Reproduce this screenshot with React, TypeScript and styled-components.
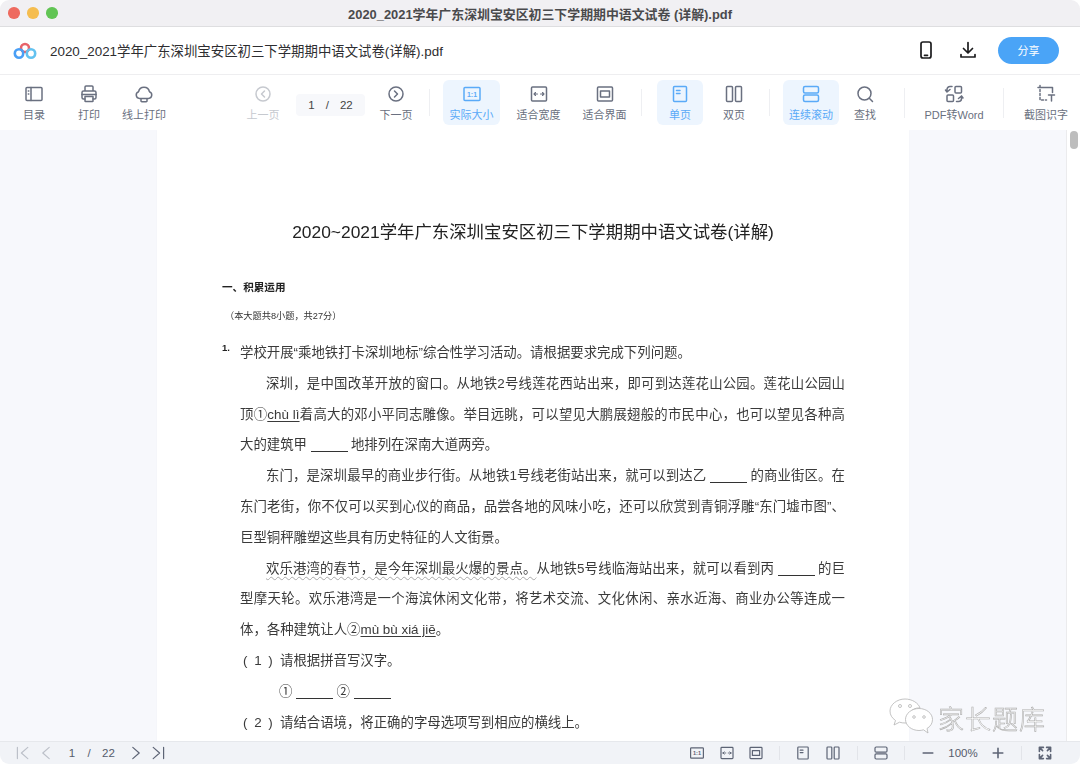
import React, { FC, ReactNode } from 'react';
import styled, { createGlobalStyle } from 'styled-components';

const UI_FONT = `"Liberation Sans", "Noto Sans CJK SC", sans-serif`;

const GlobalStyle = createGlobalStyle`
  html, body {
    margin: 0;
    padding: 0;
    background: #fff;
    overflow: hidden;
  }
  * {
    box-sizing: border-box;
  }
`;

const Window = styled.div`
  width: 1080px;
  height: 764px;
  display: flex;
  flex-direction: column;
  border-radius: 9px;
  overflow: hidden;
  position: relative;
  font-family: ${UI_FONT};
  background: #fff;
`;

const TitleBar = styled.div`
  height: 27px;
  flex: none;
  background: #f1f0f3;
  border-bottom: 1px solid #dedee0;
  position: relative;
  display: flex;
  align-items: center;
  justify-content: center;
  font-size: 12.9px;
  font-weight: 700;
  color: #4a4a4c;
`;

const Lights = styled.div`
  position: absolute;
  left: 8px;
  top: 7px;
  display: flex;
  gap: 7.5px;
`;

const Light = styled.span<{ $c: string }>`
  width: 11.5px;
  height: 11.5px;
  border-radius: 50%;
  background: ${p => p.$c};
`;

const Header = styled.div`
  height: 48px;
  flex: none;
  display: flex;
  align-items: center;
  padding: 0 21px 1px 13px;
  border-bottom: 1px solid #eeeef0;
`;

const FileName = styled.div`
  margin-left: 13px;
  font-size: 13.4px;
  color: #2d2d30;
  flex: 1;
`;

const HeaderIcon = styled.div<{ $mr: number }>`
  width: 20px;
  height: 20px;
  margin-right: ${p => p.$mr}px;
  color: #1c1c1e;
`;

const ShareButton = styled.div`
  width: 61px;
  height: 27px;
  border-radius: 14px;
  background: #4aa4f7;
  color: #fff;
  font-size: 11px;
  display: flex;
  align-items: center;
  justify-content: center;
`;

const Toolbar = styled.div`
  height: 55px;
  flex: none;
  display: flex;
  align-items: center;
  padding-left: 12px;
  background: #fff;
`;

const ToolItem = styled.div<{ $w: number; $ml?: number; $active?: boolean; $off?: boolean }>`
  width: ${p => p.$w}px;
  margin-left: ${p => p.$ml ?? 0}px;
  height: 45px;
  flex: none;
  border-radius: 6px;
  display: flex;
  flex-direction: column;
  align-items: center;
  padding-top: 4px;
  background: ${p => (p.$active ? '#edf5fe' : 'transparent')};
  color: ${p => (p.$active ? '#5aaaf8' : p.$off ? '#c6c9cf' : '#6a7080')};
  font-size: 11px;
  white-space: nowrap;
`;

const ToolIcon = styled.div`
  width: 20px;
  height: 20px;
  margin-bottom: 2px;
`;

const PageBox = styled.div`
  width: 69px;
  height: 22px;
  margin-left: 11px;
  flex: none;
  border-radius: 4px;
  background: #f7f8fb;
  color: #444;
  font-size: 11.5px;
  display: flex;
  align-items: center;
  justify-content: center;
  gap: 11px;
  position: relative;
  top: 2px;
`;

const Sep = styled.div<{ $ml: number; $h?: number }>`
  width: 1px;
  height: ${p => p.$h ?? 27}px;
  margin-left: ${p => p.$ml}px;
  flex: none;
  background: #eeeff2;
`;

const Main = styled.div`
  flex: 1;
  min-height: 0;
  display: flex;
  background: #f7f8fc;
  overflow: hidden;
`;

const Gutter = styled.div`
  width: 157px;
  flex: none;
`;

const Sheet = styled.div`
  width: 752px;
  flex: none;
  background: #fff;
  padding: 89px 0 0 65px;
  color: #3a3a3a;
  font-family: ${UI_FONT};
  box-shadow: 0 0 2px rgba(0, 0, 0, 0.03);
  filter: blur(0.25px);
`;

const DocTitle = styled.div`
  width: 622px;
  text-align: center;
  font-size: 17.4px;
  line-height: 26px;
  color: #222;
`;

const Section = styled.div`
  margin-top: 35px;
  font-size: 10.6px;
  font-weight: 700;
  line-height: 14px;
  color: #222;
`;

const Note = styled.div`
  margin: 15px 0 15px 3px;
  font-size: 9.2px;
  line-height: 14px;
  color: #333;
`;

const Line = styled.div<{ $indent?: number; $fill?: boolean }>`
  width: ${p => 605 - (p.$indent ?? 0)}px;
  margin-left: ${p => 18 + (p.$indent ?? 0)}px;
  height: 30.8px;
  line-height: 30.8px;
  font-size: 13.4px;
  white-space: nowrap;
  text-align: justify;
  text-align-last: ${p => (p.$fill ? 'justify' : 'left')};
  position: relative;
`;

const Num = styled.span`
  position: absolute;
  left: -18px;
  top: -5px;
  font-size: 9.5px;
  font-weight: 700;
  color: #222;
`;

const ListMark = styled.span`
  display: inline-block;
  width: 40px;
  padding-left: 3px;
  letter-spacing: 1.500px;
`;

const Blank = styled.span<{ $w: number }>`
  display: inline-block;
  width: ${p => p.$w}px;
  margin: 0 3px 0 4px;
  height: 10px;
  border-bottom: 1.7px solid #333;
  vertical-align: -3px;
`;

const Pinyin = styled.span`
  text-decoration: underline;
  text-underline-offset: 2px;
`;

const Wavy = styled.span`
  text-decoration: underline wavy #a9a9a9 1px;
  text-underline-offset: 3px;
`;

const ScrollCol = styled.div`
  width: 14px;
  margin-left: auto;
  flex: none;
  background: #fff;
  border-left: 1px solid #ebebed;
  padding: 1px 0 0 3px;
`;

const Thumb = styled.div`
  width: 8px;
  height: 18px;
  border-radius: 4px;
  background: #bdbdbd;
`;

const StatusBar = styled.div`
  height: 23px;
  flex: none;
  background: #f1f3f7;
  border-top: 1px solid #e6e8ec;
  display: flex;
  align-items: center;
  padding-left: 15px;
  color: #5d6475;
`;

const StatusIcon = styled.div<{ $ml?: number; $off?: boolean }>`
  width: 16px;
  height: 16px;
  flex: none;
  margin-left: ${p => p.$ml ?? 0}px;
  color: ${p => (p.$off ? '#bcc0c9' : '#5d6475')};
`;

const StatusText = styled.span<{ $ml: number; $w: number }>`
  margin-left: ${p => p.$ml}px;
  width: ${p => p.$w}px;
  flex: none;
  font-size: 11.5px;
  color: #555b6b;
  text-align: center;
`;

const StatusSep = styled.div<{ $ml: number }>`
  width: 1px;
  height: 14px;
  flex: none;
  margin-left: ${p => p.$ml}px;
  background: #e2e4e9;
`;

const Watermark = styled.div`
  position: absolute;
  left: 889px;
  top: 698px;
  display: flex;
  align-items: center;
  gap: 3px;
  filter: blur(0.3px);
`;

const MarkText = styled.span`
  font-family: "Noto Sans CJK SC", sans-serif;
  font-size: 26px;
  font-weight: 300;
  letter-spacing: 1px;
  color: #fff;
  -webkit-text-stroke: 0.6px #adadad;
`;

const Ico: FC<{ children: ReactNode; sw?: number }> = ({ children, sw = 1.5 }) => (
  <svg
    width="100%"
    height="100%"
    viewBox="0 0 20 20"
    fill="none"
    stroke="currentColor"
    strokeWidth={sw}
    strokeLinecap="round"
    strokeLinejoin="round"
    style={{ display: 'block' }}
  >
    {children}
  </svg>
);

const SmallLabel: FC<{ x: number; y: number; text: string }> = ({ x, y, text }) => (
  <text x={x} y={y} fontSize={7} fontWeight={700} fill="currentColor" stroke="none" textAnchor="middle" fontFamily="Liberation Sans">
    {text}
  </text>
);

const OneToOne = () => (
  <Ico>
    <rect x="2" y="3.500" width="16" height="13" rx="1" />
    <SmallLabel x={10} y={12.600} text="1:1" />
  </Ico>
);
const FitWidth = () => (
  <Ico>
    <rect x="2.500" y="3" width="15" height="14" rx="1" />
    <path d="M5 10h3.500M5 10l1.500-1.500M5 10l1.500 1.500M15 10h-3.500M15 10l-1.500-1.500M15 10l-1.500 1.500" strokeWidth="1.100" />
  </Ico>
);
const FitPage = () => (
  <Ico>
    <rect x="2.500" y="3" width="15" height="14" rx="1" />
    <rect x="5.500" y="7" width="9" height="6" />
  </Ico>
);
const SinglePage = () => (
  <Ico>
    <rect x="3.500" y="2.500" width="13" height="15" rx="1" />
    <path d="M6.500 6.500h3.500M6.500 9.500h3.500" />
  </Ico>
);
const DoublePage = () => (
  <Ico>
    <rect x="2.500" y="2.500" width="6" height="15" rx="1" />
    <rect x="11.500" y="2.500" width="6" height="15" rx="1" />
  </Ico>
);
const Continuous = () => (
  <Ico>
    <rect x="2.500" y="2.500" width="15" height="6.500" rx="1.500" />
    <rect x="2.500" y="11" width="15" height="6.500" rx="1.500" />
  </Ico>
);

const Logo = () => (
  <svg width="24" height="20" viewBox="0 0 24 20" fill="none" style={{ display: 'block' }}>
    <circle cx="12" cy="8" r="4" stroke="#e8636a" strokeWidth="2.600" />
    <circle cx="18" cy="13.500" r="4.200" stroke="#63c2f0" strokeWidth="2.600" />
    <circle cx="6" cy="13.500" r="4.200" stroke="#4a9ff5" strokeWidth="2.600" />
  </svg>
);

const WeChat = () => (
  <svg width="46" height="38" viewBox="0 0 46 38" fill="#fff" stroke="#b4b4b4" strokeWidth="0.8">
    <path d="M16 1C8 1 1 6.500 1 13c0 4 2 7 5.500 9.500L5 27l5.500-2.800c2 .6 3.500.8 5.500.8 .8 0 1.500 0 2-.1C17 17 23 9 31 10 29.500 5 23 1 16 1z" />
    <path d="M30 10.500c-7.500 0-13.500 5-13.500 11s6 11 13.500 11c1.500 0 3-.2 4.500-.7L39 35l-1-4.500c3.500-2 5.500-5.300 5.500-9 0-6-6-11-13.500-11z" />
    <circle cx="11" cy="8" r="1.500" />
    <circle cx="21" cy="8" r="1.500" />
    <circle cx="25" cy="19" r="1.300" />
    <circle cx="35" cy="19" r="1.300" />
  </svg>
);

const App: FC = () => {
  return (
    <>
      <GlobalStyle />
      <Window>
        <TitleBar>
          <Lights>
            <Light $c="#ee6a5f" />
            <Light $c="#f5bd4f" />
            <Light $c="#61c454" />
          </Lights>
          2020_2021学年广东深圳宝安区初三下学期期中语文试卷 (详解).pdf
        </TitleBar>
        <Header>
          <Logo />
          <FileName>2020_2021学年广东深圳宝安区初三下学期期中语文试卷(详解).pdf</FileName>
          <HeaderIcon $mr={22}>
            <Ico sw={1.700}>
              <rect x="5" y="2" width="10" height="16" rx="2" />
              <path d="M8.500 15.300h3" />
            </Ico>
          </HeaderIcon>
          <HeaderIcon $mr={20}>
            <Ico sw={1.700}>
              <path d="M10 2.500v10M5.500 8.500l4.500 4.500 4.500-4.500M3 14.500v2.500h14v-2.500" />
            </Ico>
          </HeaderIcon>
          <ShareButton>分享</ShareButton>
        </Header>
        <Toolbar>
          <ToolItem $w={44}>
            <ToolIcon>
              <Ico>
                <rect x="2" y="3.500" width="16" height="13" rx="1" />
                <path d="M7 3.500v13M4.300 7h.5M4.300 10h.5" />
              </Ico>
            </ToolIcon>
            目录
          </ToolItem>
          <ToolItem $w={44} $ml={11}>
            <ToolIcon>
              <Ico>
                <path d="M6 7V3a1 1 0 0 1 1-1h6a1 1 0 0 1 1 1v4M6 15H4.500A1.500 1.500 0 0 1 3 13.500V8.500A1.500 1.500 0 0 1 4.500 7h11A1.500 1.500 0 0 1 17 8.500v5a1.500 1.500 0 0 1-1.500 1.500H14" />
                <path d="M6 12.500h8V17a.5.5 0 0 1-.5.5h-7A.5.5 0 0 1 6 17zM3 10.500h14" />
              </Ico>
            </ToolIcon>
            打印
          </ToolItem>
          <ToolItem $w={56} $ml={5}>
            <ToolIcon>
              <Ico>
                <path d="M7 14.500H5.500a3.500 3.500 0 0 1-.9-6.800 5.500 5.500 0 0 1 10.800 0 3.500 3.500 0 0 1-.9 6.800H7zM7 14.500v2.500a.8.8 0 0 0 .8.8h4.400a.8.8 0 0 0 .8-.8v-2.500" />
              </Ico>
            </ToolIcon>
            线上打印
          </ToolItem>
          <ToolItem $w={44} $ml={69} $off>
            <ToolIcon>
              <Ico>
                <circle cx="10" cy="10" r="7" />
                <path d="M11.500 7L8.500 10l3 3" />
              </Ico>
            </ToolIcon>
            上一页
          </ToolItem>
          <PageBox>
            <span>1</span>
            <span>/</span>
            <span>22</span>
          </PageBox>
          <ToolItem $w={44} $ml={9}>
            <ToolIcon>
              <Ico>
                <circle cx="10" cy="10" r="7" />
                <path d="M8.500 7l3 3-3 3" />
              </Ico>
            </ToolIcon>
            下一页
          </ToolItem>
          <Sep $ml={11} />
          <ToolItem $w={57} $ml={13} $active>
            <ToolIcon><OneToOne /></ToolIcon>
            实际大小
          </ToolItem>
          <ToolItem $w={57} $ml={10}>
            <ToolIcon><FitWidth /></ToolIcon>
            适合宽度
          </ToolItem>
          <ToolItem $w={57} $ml={9}>
            <ToolIcon><FitPage /></ToolIcon>
            适合界面
          </ToolItem>
          <Sep $ml={8} />
          <ToolItem $w={46} $ml={15} $active>
            <ToolIcon><SinglePage /></ToolIcon>
            单页
          </ToolItem>
          <ToolItem $w={46} $ml={8}>
            <ToolIcon><DoublePage /></ToolIcon>
            双页
          </ToolItem>
          <Sep $ml={12} />
          <ToolItem $w={56} $ml={13} $active>
            <ToolIcon><Continuous /></ToolIcon>
            连续滚动
          </ToolItem>
          <ToolItem $w={44} $ml={4}>
            <ToolIcon>
              <Ico>
                <circle cx="9.500" cy="9.500" r="6.500" />
                <path d="M14.300 14.300l3.200 3.200" />
              </Ico>
            </ToolIcon>
            查找
          </ToolItem>
          <Sep $ml={17} $h={30} />
          <ToolItem $w={76} $ml={11}>
            <ToolIcon>
              <Ico>
                <rect x="11" y="2.500" width="6.500" height="6.500" rx="1" />
                <rect x="3" y="11" width="6.500" height="6.500" rx="1" />
                <path d="M3 8V5.500a3 3 0 0 1 3-3h2M6 5.500L3 8 1.500 6M17.500 12v2.500a3 3 0 0 1-3 3h-2M14.500 14.500l3-2.500 1.500 2" />
              </Ico>
            </ToolIcon>
            PDF转Word
          </ToolItem>
          <Sep $ml={11} $h={30} />
          <ToolItem $w={56} $ml={14}>
            <ToolIcon>
              <Ico>
                <path d="M4 1.500v2M2 3.500h14.500v5" />
                <path d="M4 5.500v10.500h6.500" strokeDasharray="2 2" />
                <path d="M12.500 11h6M15.500 11v6" />
              </Ico>
            </ToolIcon>
            截图识字
          </ToolItem>
        </Toolbar>
        <Main>
          <Gutter />
          <Sheet>
            <DocTitle>2020~2021学年广东深圳宝安区初三下学期期中语文试卷(详解)</DocTitle>
            <Section>一、积累运用</Section>
            <Note>（本大题共8小题，共27分）</Note>
            <Line>
              <Num>1.</Num>
              学校开展“乘地铁打卡深圳地标”综合性学习活动。请根据要求完成下列问题。
            </Line>
            <Line $indent={26} $fill>深圳，是中国改革开放的窗口。从地铁2号线莲花西站出来，即可到达莲花山公园。莲花山公园山</Line>
            <Line $fill>顶①<Pinyin>chù lì</Pinyin>着高大的邓小平同志雕像。举目远眺，可以望见大鹏展翅般的市民中心，也可以望见各种高</Line>
            <Line>大的建筑甲<Blank $w={37} />地排列在深南大道两旁。</Line>
            <Line $indent={26} $fill>东门，是深圳最早的商业步行街。从地铁1号线老街站出来，就可以到达乙<Blank $w={37} />的商业街区。在</Line>
            <Line $fill>东门老街，你不仅可以买到心仪的商品，品尝各地的风味小吃，还可以欣赏到青铜浮雕“东门墟市图”、</Line>
            <Line>巨型铜秤雕塑这些具有历史特征的人文街景。</Line>
            <Line $indent={26} $fill><Wavy>欢乐港湾的春节，是今年深圳最火爆的景点。</Wavy>从地铁5号线临海站出来，就可以看到丙<Blank $w={37} />的巨</Line>
            <Line $fill>型摩天轮。欢乐港湾是一个海滨休闲文化带，将艺术交流、文化休闲、亲水近海、商业办公等连成一</Line>
            <Line>体，各种建筑让人②<Pinyin>mù bù xiá jiē</Pinyin>。</Line>
            <Line><ListMark>( 1 )</ListMark>请根据拼音写汉字。</Line>
            <Line $indent={39}>①<Blank $w={37} />②<Blank $w={37} /></Line>
            <Line><ListMark>( 2 )</ListMark>请结合语境，将正确的字母选项写到相应的横线上。</Line>
          </Sheet>
          <ScrollCol>
            <Thumb />
          </ScrollCol>
        </Main>
        <StatusBar>
          <StatusIcon $off>
            <Ico><path d="M3 3v14M16 3L8 10l8 7" /></Ico>
          </StatusIcon>
          <StatusIcon $ml={7} $off>
            <Ico><path d="M14 3L6 10l8 7" /></Ico>
          </StatusIcon>
          <StatusText $ml={12} $w={12}>1</StatusText>
          <StatusText $ml={6} $w={10}>/</StatusText>
          <StatusText $ml={6} $w={17}>22</StatusText>
          <StatusIcon $ml={11}>
            <Ico><path d="M6 3l8 7-8 7" /></Ico>
          </StatusIcon>
          <StatusIcon $ml={6}>
            <Ico><path d="M4 3l8 7-8 7M17 3v14" /></Ico>
          </StatusIcon>
          <StatusIcon $ml={523}><OneToOne /></StatusIcon>
          <StatusIcon $ml={14}><FitWidth /></StatusIcon>
          <StatusIcon $ml={13}><FitPage /></StatusIcon>
          <StatusSep $ml={15} />
          <StatusIcon $ml={15}><SinglePage /></StatusIcon>
          <StatusIcon $ml={14}><DoublePage /></StatusIcon>
          <StatusSep $ml={16} />
          <StatusIcon $ml={15}><Continuous /></StatusIcon>
          <StatusSep $ml={15} />
          <StatusIcon $ml={15}>
            <Ico sw={2}><path d="M4 10h12" /></Ico>
          </StatusIcon>
          <StatusText $ml={11} $w={32}>100%</StatusText>
          <StatusIcon $ml={11}>
            <Ico sw={2}><path d="M4 10h12M10 4v12" /></Ico>
          </StatusIcon>
          <StatusSep $ml={15} />
          <StatusIcon $ml={15}>
            <Ico sw={2}><path d="M3 8V3h5M3 3l4 4M12 3h5v5M17 3l-4 4M3 12v5h5M3 17l4-4M17 12v5h-5M17 17l-4-4" /></Ico>
          </StatusIcon>
        </StatusBar>
        <Watermark>
          <WeChat />
          <MarkText>家长题库</MarkText>
        </Watermark>
      </Window>
    </>
  );
};

export default App;
